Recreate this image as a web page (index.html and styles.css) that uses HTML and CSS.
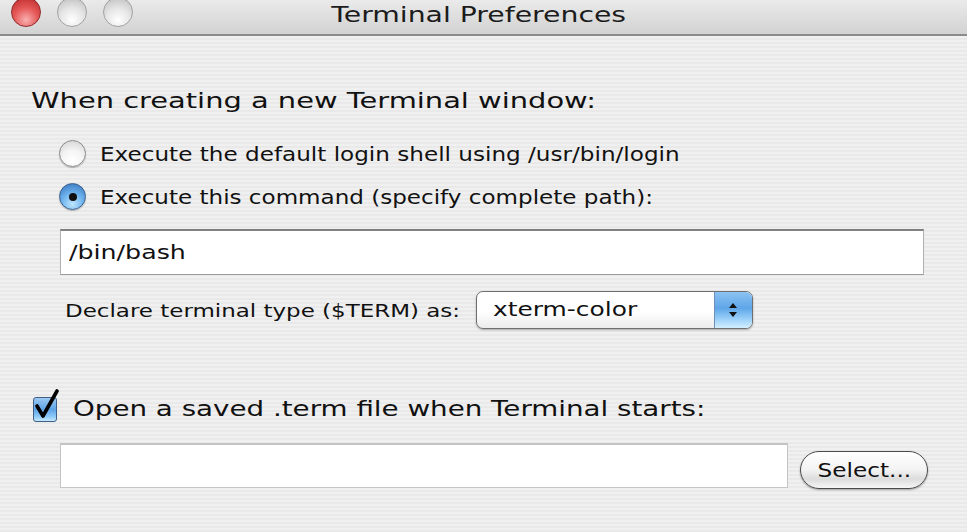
FILE: index.html
```html
<!DOCTYPE html>
<html>
<head>
<meta charset="utf-8">
<link rel="stylesheet" href="styles.css">
</head>
<body>
<div class="window">
  <div class="titlebar">
    <div class="lights">
      <span class="light red"></span>
      <span class="light gray"></span>
      <span class="light gray"></span>
    </div>
    <div class="title">Terminal Preferences</div>
  </div>
  <div class="content">
    <div class="heading"><span class="heading-text">When creating a new Terminal window:</span></div>
    <div class="radio-row">
      <span class="radio"></span>
      <span class="label opt1">Execute the default login shell using /usr/bin/login</span>
    </div>
    <div class="radio-row">
      <span class="radio on"><span class="dot"></span></span>
      <span class="label opt2">Execute this command (specify complete path):</span>
    </div>
    <div class="field cmd"><span class="cmd-text">/bin/bash</span></div>
    <div class="declare-row">
      <span class="label small">Declare terminal type ($TERM) as:</span>
      <div class="popup">
        <span class="popup-text"><span class="popup-value">xterm-color</span></span>
        <span class="popup-arrows">
          <svg width="10" height="16" viewBox="0 0 10 16"><path d="M5 1 L9 6 L1 6 Z" fill="#111"/><path d="M5 15 L9 10 L1 10 Z" fill="#111"/></svg>
        </span>
      </div>
    </div>
    <div class="check-row">
      <span class="checkbox">
        <svg class="tick" width="30" height="34" viewBox="0 0 30 34"><path d="M6 17 L12 27 L26 2" fill="none" stroke="#000" stroke-width="3.6" stroke-linecap="round" stroke-linejoin="round"/></svg>
      </span>
      <span class="label big">Open a saved .term file when Terminal starts:</span>
    </div>
    <div class="file-row">
      <div class="field file"></div>
      <div class="button"><span class="button-text">Select...</span></div>
    </div>
  </div>
</div>
</body>
</html>
```

FILE: styles.css
```css
html, body {
  margin: 0;
  padding: 0;
}
body {
  width: 967px;
  height: 532px;
  overflow: hidden;
  font-family: "DejaVu Sans", "Liberation Sans", sans-serif;
  color: #111;
}
.window {
  width: 967px;
  height: 532px;
  background: repeating-linear-gradient(#f0f0f0 0 2px, #e9e9e9 2px 4px);
  display: flex;
  flex-direction: column;
}
.titlebar {
  position: relative;
  height: 34px;
  flex: none;
  background: linear-gradient(#eaeaea, #d2d2d2);
  border-bottom: 2px solid #8c8c8c;
  display: flex;
  align-items: flex-start;
  justify-content: center;
}
.lights {
  position: absolute;
  left: 11px;
  top: -3px;
  display: flex;
  gap: 16px;
}
.light {
  width: 30px;
  height: 30px;
  border-radius: 50%;
  box-sizing: border-box;
}
.light.red {
  background: radial-gradient(circle at 50% 78%, #f9b0b0 0, #e65a5a 45%, #b72424 100%);
  border: 1px solid #8f2a2a;
}
.light.gray {
  background: radial-gradient(circle at 50% 78%, #ffffff 0, #e6e6e6 45%, #b9b9b9 100%);
  border: 1px solid #a2a2a2;
}
.title {
  font-size: 22px;
  line-height: 30px;
  color: #1c1c1c;
  margin-left: -9px;
  transform: scaleX(1.285);
}
.content {
  padding: 50px 0 0 0;
  display: flex;
  flex-direction: column;
}
.heading {
  font-size: 21px;
  line-height: 30px;
  margin: 0 0 16px 31px;
}
.heading-text {
  display: inline-block;
  transform-origin: 0 50%;
  transform: scaleX(1.376);
}
.radio-row {
  height: 43px;
  display: flex;
  align-items: center;
  margin-left: 59px;
}
.radio {
  width: 27px;
  height: 27px;
  box-sizing: border-box;
  border-radius: 50%;
  border: 1px solid #8b8b8b;
  background: radial-gradient(circle at 50% 78%, #ffffff 0, #f4f4f4 45%, #cfcfcf 100%);
  box-shadow: 0 1px 1px rgba(0,0,0,0.25);
  display: flex;
  align-items: center;
  justify-content: center;
  flex: none;
}
.radio.on {
  border-color: #3b5e8c;
  background: radial-gradient(circle at 50% 80%, #bfe6ff 0, #6fb4ee 45%, #2f6fb8 100%);
}
.dot {
  width: 8px;
  height: 8px;
  border-radius: 50%;
  background: #111;
}
.label {
  display: inline-block;
  font-size: 19px;
  margin-left: 14px;
  white-space: nowrap;
  transform-origin: 0 50%;
}
.label.opt1 {
  transform: scaleX(1.216);
}
.label.opt2 {
  transform: scaleX(1.213);
}
.field {
  box-sizing: border-box;
  background: #fff;
  border: 1px solid #9a9a9a;
  border-top: 2px solid #808080;
  border-left-color: #b0b0b0;
  border-right-color: #b0b0b0;
}
.field.cmd {
  margin: 11px 0 0 60px;
  width: 864px;
  height: 46px;
  font-size: 19px;
  line-height: 42px;
  padding-left: 8px;
}
.cmd-text {
  display: inline-block;
  transform-origin: 0 50%;
  transform: scaleX(1.33);
}
.declare-row {
  display: flex;
  align-items: center;
  margin: 16px 0 0 65px;
}
.label.small {
  margin-left: 0;
  font-size: 18px;
  transform: scaleX(1.276);
}
.popup {
  margin-left: 101px;
  width: 277px;
  height: 38px;
  box-sizing: border-box;
  border: 1px solid #6f6f6f;
  border-radius: 7px;
  display: flex;
  overflow: hidden;
  background: linear-gradient(#ffffff 0, #ffffff 55%, #ececec 100%);
  box-shadow: 0 1px 2px rgba(0,0,0,0.3);
}
.popup-text {
  flex: 1;
  font-size: 19px;
  line-height: 34px;
  padding-left: 16px;
}
.popup-value {
  display: inline-block;
  transform-origin: 0 50%;
  transform: scaleX(1.31);
}
.popup-arrows {
  width: 37px;
  display: flex;
  align-items: center;
  justify-content: center;
  border-left: 1px solid #6d8fb8;
  background: linear-gradient(#8cc2f2 0, #5ea6e8 45%, #9bd0f8 75%, #d3eeff 100%);
}
.check-row {
  display: flex;
  align-items: center;
  height: 32px;
  margin: 64px 0 0 33px;
}
.checkbox {
  position: relative;
  width: 24px;
  height: 25px;
  box-sizing: border-box;
  border: 1px solid #3f5f86;
  border-radius: 3px;
  background: linear-gradient(#9ccaf2 0, #5ea3e6 50%, #8cc9f7 80%, #c6e8ff 100%);
  flex: none;
}
.tick {
  position: absolute;
  left: -3px;
  top: -9px;
}
.label.big {
  font-size: 21px;
  margin-left: 16px;
  transform: scaleX(1.32);
}
.file-row {
  display: flex;
  align-items: flex-end;
  margin: 18px 0 0 60px;
}
.field.file {
  width: 728px;
  height: 45px;
  border-top: 2px solid #b8b8b8;
  border-color: #c4c4c4;
}
.button {
  margin-left: 12px;
  margin-bottom: -1px;
  width: 128px;
  height: 38px;
  box-sizing: border-box;
  border: 1px solid #4a4a4a;
  border-radius: 19px;
  background: linear-gradient(#ffffff 0, #f3f3f3 50%, #dcdcdc 75%, #f6f6f6 100%);
  box-shadow: 0 1px 2px rgba(0,0,0,0.35);
  font-size: 19px;
  line-height: 36px;
  text-align: center;
}
.button-text {
  display: inline-block;
  transform: scaleX(1.22);
}
```
